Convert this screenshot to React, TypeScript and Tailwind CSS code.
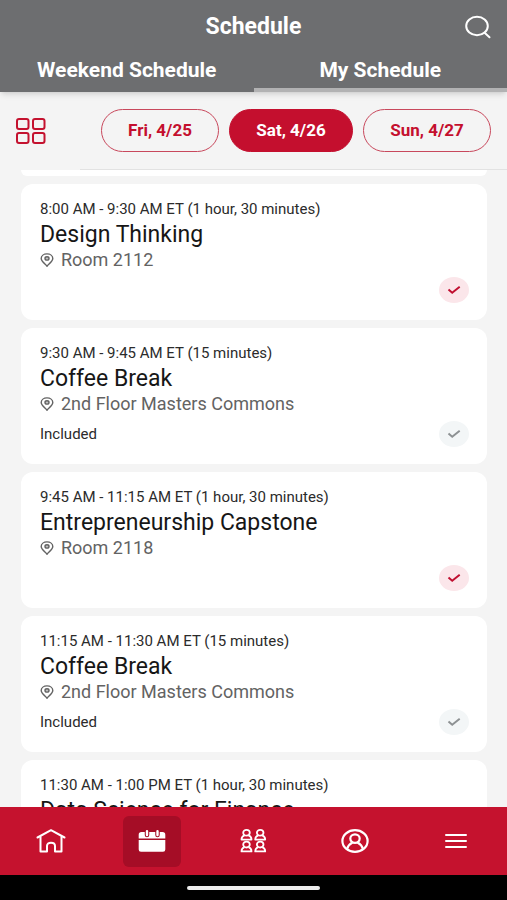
import React, { useState } from "react";

type Session = {
  time: string;
  title: string;
  place?: string;
  included: boolean;
};

const sessions: Session[] = [
  { time: "8:00 AM - 9:30 AM ET (1 hour, 30 minutes)", title: "Design Thinking", place: "Room 2112", included: false },
  { time: "9:30 AM - 9:45 AM ET (15 minutes)", title: "Coffee Break", place: "2nd Floor Masters Commons", included: true },
  { time: "9:45 AM - 11:15 AM ET (1 hour, 30 minutes)", title: "Entrepreneurship Capstone", place: "Room 2118", included: false },
  { time: "11:15 AM - 11:30 AM ET (15 minutes)", title: "Coffee Break", place: "2nd Floor Masters Commons", included: true },
  { time: "11:30 AM - 1:00 PM ET (1 hour, 30 minutes)", title: "Data Science for Finance", included: false },
];

const days = ["Fri, 4/25", "Sat, 4/26", "Sun, 4/27"];

function SearchIcon() {
  return (
    <svg width="26" height="24" viewBox="0 0 26 24" fill="none" stroke="currentColor" strokeWidth="2" strokeLinecap="round" aria-hidden="true">
      <ellipse cx="12" cy="11" rx="10.800" ry="9.300" />
      <path d="M19.300 17.600 24.500 22.300" />
    </svg>
  );
}

function GridIcon() {
  return (
    <svg width="30" height="26" viewBox="0 0 30 26" fill="none" stroke="currentColor" strokeWidth="2" aria-hidden="true">
      <rect x="1" y="1" width="11.500" height="10" rx="2" />
      <rect x="17" y="1" width="11.500" height="10" rx="2" />
      <rect x="1" y="15" width="11.500" height="10" rx="2" />
      <rect x="17" y="15" width="11.500" height="10" rx="2" />
    </svg>
  );
}

function PinIcon() {
  return (
    <svg width="14" height="14" viewBox="0 0 14 14" fill="none" stroke="currentColor" strokeWidth="1.400" strokeLinejoin="round" aria-hidden="true">
      <path d="M7 13.200C5.600 11.400 1.200 8.400 1.200 5.600 1.200 2.900 3.800.900 7 .900s5.800 2 5.800 4.700c0 2.800-4.400 5.800-5.800 7.600Z" />
      <ellipse cx="7" cy="5.400" rx="2" ry="1.700" fill="currentColor" fillOpacity="0.400" />
    </svg>
  );
}

function CheckIcon() {
  return (
    <svg width="14" height="10" viewBox="0 0 14 10" fill="none" stroke="currentColor" strokeWidth="2" aria-hidden="true">
      <path d="M1.500 4.500 5.200 7.700 12.700 1.800" />
    </svg>
  );
}

function HomeIcon() {
  return (
    <svg width="30" height="24" viewBox="0 0 30 24" fill="none" stroke="currentColor" strokeWidth="2" strokeLinecap="round" strokeLinejoin="round" aria-hidden="true">
      <path d="M1.500 8.500 15 1.200 28.500 8.500" />
      <path d="M4.500 8V22.500H11V17c0-2 1.600-3.300 4-3.300s4 1.300 4 3.300v5.500H25.500V8" />
    </svg>
  );
}

function CalendarIcon() {
  return (
    <svg width="28" height="24" viewBox="0 0 28 24" aria-hidden="true">
      <path fill="currentColor" d="M3.500 3H24.500a2.800 2.800 0 0 1 2.800 2.800V9.500H.700V5.800A2.800 2.800 0 0 1 3.500 3ZM.700 11H27.300V20.500a2.300 2.300 0 0 1-2.300 2.300H3A2.300 2.300 0 0 1 .700 20.500Z" />
      <path d="M9 1.500V6M19.500 1.500V6" stroke="#a50d26" strokeWidth="4.500" strokeLinecap="round" />
      <path d="M9 2.200V6M19.500 2.200V6" stroke="currentColor" strokeWidth="2.400" strokeLinecap="round" />
    </svg>
  );
}

function PersonMark({ x, y }: { x: number; y: number }) {
  return (
    <g transform={`translate(${x} ${y})`}>
      <ellipse cx="6" cy="3.800" rx="3.300" ry="2.900" />
      <path d="M4 6.300C2 7 1 8.300 1 10.600H11C11 8.300 10 7 8 6.300" />
    </g>
  );
}

function PeopleIcon() {
  return (
    <svg width="27" height="24" viewBox="0 0 27 24" fill="none" stroke="currentColor" strokeWidth="1.800" strokeLinejoin="round" aria-hidden="true">
      <PersonMark x={0.5} y={0} />
      <PersonMark x={14.2} y={0} />
      <PersonMark x={0.5} y={11.8} />
      <PersonMark x={14.2} y={11.8} />
    </svg>
  );
}

function ProfileIcon() {
  return (
    <svg width="28" height="24" viewBox="0 0 28 24" fill="none" stroke="currentColor" strokeWidth="2.200" aria-hidden="true">
      <ellipse cx="14" cy="12" rx="12.600" ry="10.800" />
      <ellipse cx="14" cy="9.600" rx="4.700" ry="4.200" />
      <path d="M6 20C7 16.500 9.500 14.500 11.500 13.500M22 20C21 16.500 18.500 14.500 16.500 13.500" />
    </svg>
  );
}

function MenuIcon() {
  return (
    <svg width="24" height="16" viewBox="0 0 24 16" fill="none" stroke="currentColor" strokeWidth="2" strokeLinecap="round" aria-hidden="true">
      <path d="M2 2H22M2 8H22M2 14H22" />
    </svg>
  );
}

const navItems = [
  { label: "Home", icon: <HomeIcon /> },
  { label: "Schedule", icon: <CalendarIcon /> },
  { label: "People", icon: <PeopleIcon /> },
  { label: "Profile", icon: <ProfileIcon /> },
  { label: "Menu", icon: <MenuIcon /> },
];

function SessionCard({ session }: { session: Session }) {
  return (
    <li className="flex h-[136px] shrink-0 flex-col rounded-xl bg-white pt-4 pr-[18px] pb-[17px] pl-[19px]">
      <p className="text-[15px] leading-[18px] text-[#2b2b2b]">{session.time}</p>
      <h2 className="text-[23px] leading-[33px] text-[#161616]">{session.title}</h2>
      {session.place && (
        <p className="flex items-center gap-[7px] text-[18px] leading-[18px] text-[#636363]">
          <PinIcon />
          {session.place}
        </p>
      )}
      <div className="mt-auto flex items-center justify-between">
        <span className="text-[15px] leading-5 text-[#2b2b2b]">{session.included ? "Included" : ""}</span>
        <button
          type="button"
          aria-label={`${session.title} is in my schedule`}
          className={
            session.included
              ? "flex h-[26px] w-[30px] items-center justify-center rounded-[50%] bg-[#f3f6f7] text-[#8d9193]"
              : "flex h-[26px] w-[30px] items-center justify-center rounded-[50%] bg-[#fbe6ea] text-[#c00f30]"
          }
        >
          <CheckIcon />
        </button>
      </div>
    </li>
  );
}

export default function App() {
  const [day, setDay] = useState(1);

  return (
    <div className="flex h-screen flex-col overflow-hidden bg-[#f4f4f4] font-['Roboto',sans-serif]">
      <header className="z-10 shrink-0 bg-[#6d6e70] text-white shadow-md">
        <div className="grid h-[54px] grid-cols-[1fr_auto_1fr] items-center px-4">
          <h1 className="col-start-2 text-[23px] font-bold leading-6">Schedule</h1>
          <button type="button" aria-label="Search" className="justify-self-end">
            <SearchIcon />
          </button>
        </div>
        <nav className="grid h-[38px] grid-cols-2 text-[21px] font-bold leading-8">
          <a href="#weekend" className="text-center">Weekend Schedule</a>
          <a href="#mine" className="border-b-4 border-[#b2b2b3] text-center">My Schedule</a>
        </nav>
      </header>

      <div className="flex h-[77px] shrink-0 items-center justify-between px-4">
        <button type="button" aria-label="Grid view" className="text-[#c4122f]">
          <GridIcon />
        </button>
        <div className="flex gap-[10px]">
          {days.map((label, i) => (
            <button
              key={label}
              type="button"
              aria-pressed={i === day}
              onClick={() => setDay(i)}
              className={
                i === day
                  ? "h-[43px] w-[124px] rounded-full border border-[#c40f2e] bg-[#c40f2e] text-[17px] font-bold text-white"
                  : "h-[43px] w-[124px] rounded-full border border-[#c8485c] text-[17px] font-bold text-[#c40f2e] first:w-[118px] last:w-[128px]"
              }
            >
              {label}
            </button>
          ))}
        </div>
      </div>

      <main className="flex min-h-0 flex-1 flex-col overflow-y-auto [scrollbar-width:none]">
        <div className="ml-20 h-px shrink-0 bg-[#e2e2e2]" />
        <div className="mr-5 mb-2 ml-[21px] h-[6px] shrink-0 rounded-b-xl bg-white" />
        <ul className="mr-5 ml-[21px] flex flex-col gap-2">
          {sessions.map((session) => (
            <SessionCard key={session.time} session={session} />
          ))}
        </ul>
      </main>

      <nav className="grid h-[68px] shrink-0 grid-cols-5 bg-[#c5122e] text-white">
        {navItems.map((item) => (
          <a key={item.label} href={`#${item.label.toLowerCase()}`} aria-label={item.label} className="flex items-center justify-center">
            <span
              className={
                item.label === "Schedule"
                  ? "flex h-[51px] w-[58px] items-center justify-center rounded-md bg-[#a50d26]"
                  : "flex h-[51px] w-[58px] items-center justify-center"
              }
            >
              {item.icon}
            </span>
          </a>
        ))}
      </nav>
      <footer className="flex h-[25px] shrink-0 items-center justify-center bg-black">
        <div className="h-1 w-[133px] rounded-full bg-[#ececec]" />
      </footer>
    </div>
  );
}
